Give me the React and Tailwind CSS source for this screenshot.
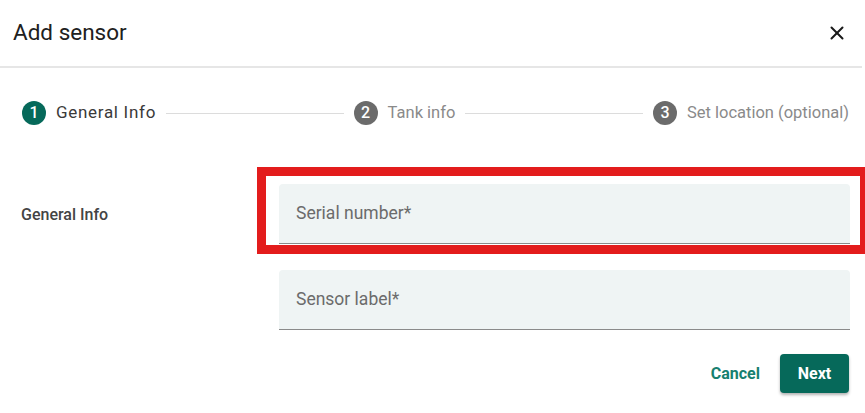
import React from 'react';
import { X } from 'lucide-react';

const steps = [
    { n: 1, label: 'General Info', active: true },
    { n: 2, label: 'Tank info' },
    { n: 3, label: 'Set location (optional)' },
];

const Field = ({ placeholder }) => (
    <div className="h-[60px] bg-[#eff4f4] rounded-t-[4px] border-b border-[#8a8a8a] flex items-center px-[17px]">
        <span className="text-[17.5px] text-[#6b6b6b]">{placeholder}</span>
    </div>
);

const App = () => {
    return (
        <div className="relative w-[865px] h-[413px] bg-white overflow-hidden font-['Roboto',sans-serif]">
            <div className="h-[68px] flex items-center justify-between pl-[13px] pr-[14px] border-b-2 border-[#e6e6e6] mr-[3px]">
                <h1 className="text-[22.5px] text-[#202020] font-normal">Add sensor</h1>
                <X size={22} strokeWidth={2.2} className="text-[#1a1a1a]" />
            </div>

            <div className="flex items-center mt-[32px] pl-[22px] pr-[16px] h-[26px]">
                {steps.map((s, i) => (
                    <React.Fragment key={s.n}>
                        {i > 0 && <div className="flex-1 h-px bg-[#dcdcdc] mx-[10px]" />}
                        <div className="flex items-center gap-[10px]">
                            <div className={`w-[24px] h-[24px] rounded-full flex items-center justify-center text-white text-[16px] font-medium ${s.active ? 'bg-[#06695a]' : 'bg-[#6b6b6b]'}`}>
                                {s.n}
                            </div>
                            <span className={s.active ? 'text-[17px] tracking-[0.7px] text-[#3a3a3a]' : 'text-[16.5px] text-[#8a8a8a]'}>{s.label}</span>
                        </div>
                    </React.Fragment>
                ))}
            </div>

            <div className="flex mt-[58px]">
                <div className="w-[279px] pl-[21px] pt-[19px]">
                    <span className="text-[16px] font-medium text-[#444]">General Info</span>
                </div>
                <div className="w-[571px] flex flex-col gap-[26px]">
                    <Field placeholder="Serial number*" />
                    <Field placeholder="Sensor label*" />
                </div>
            </div>

            <div className="flex justify-end items-center gap-[20px] mt-[24px] pr-[16px]">
                <button className="text-[16px] font-bold text-[#17806f]">Cancel</button>
                <button className="w-[69px] h-[39px] rounded-[4px] bg-[#06695a] text-white text-[16px] font-bold shadow-[0_2px_3px_rgba(0,0,0,0.3)]">Next</button>
            </div>

            <div className="absolute left-[257px] top-[167px] w-[612px] h-[87px] border-[9px] border-[#e31c1c]" />
        </div>
    );
};

export default App;
